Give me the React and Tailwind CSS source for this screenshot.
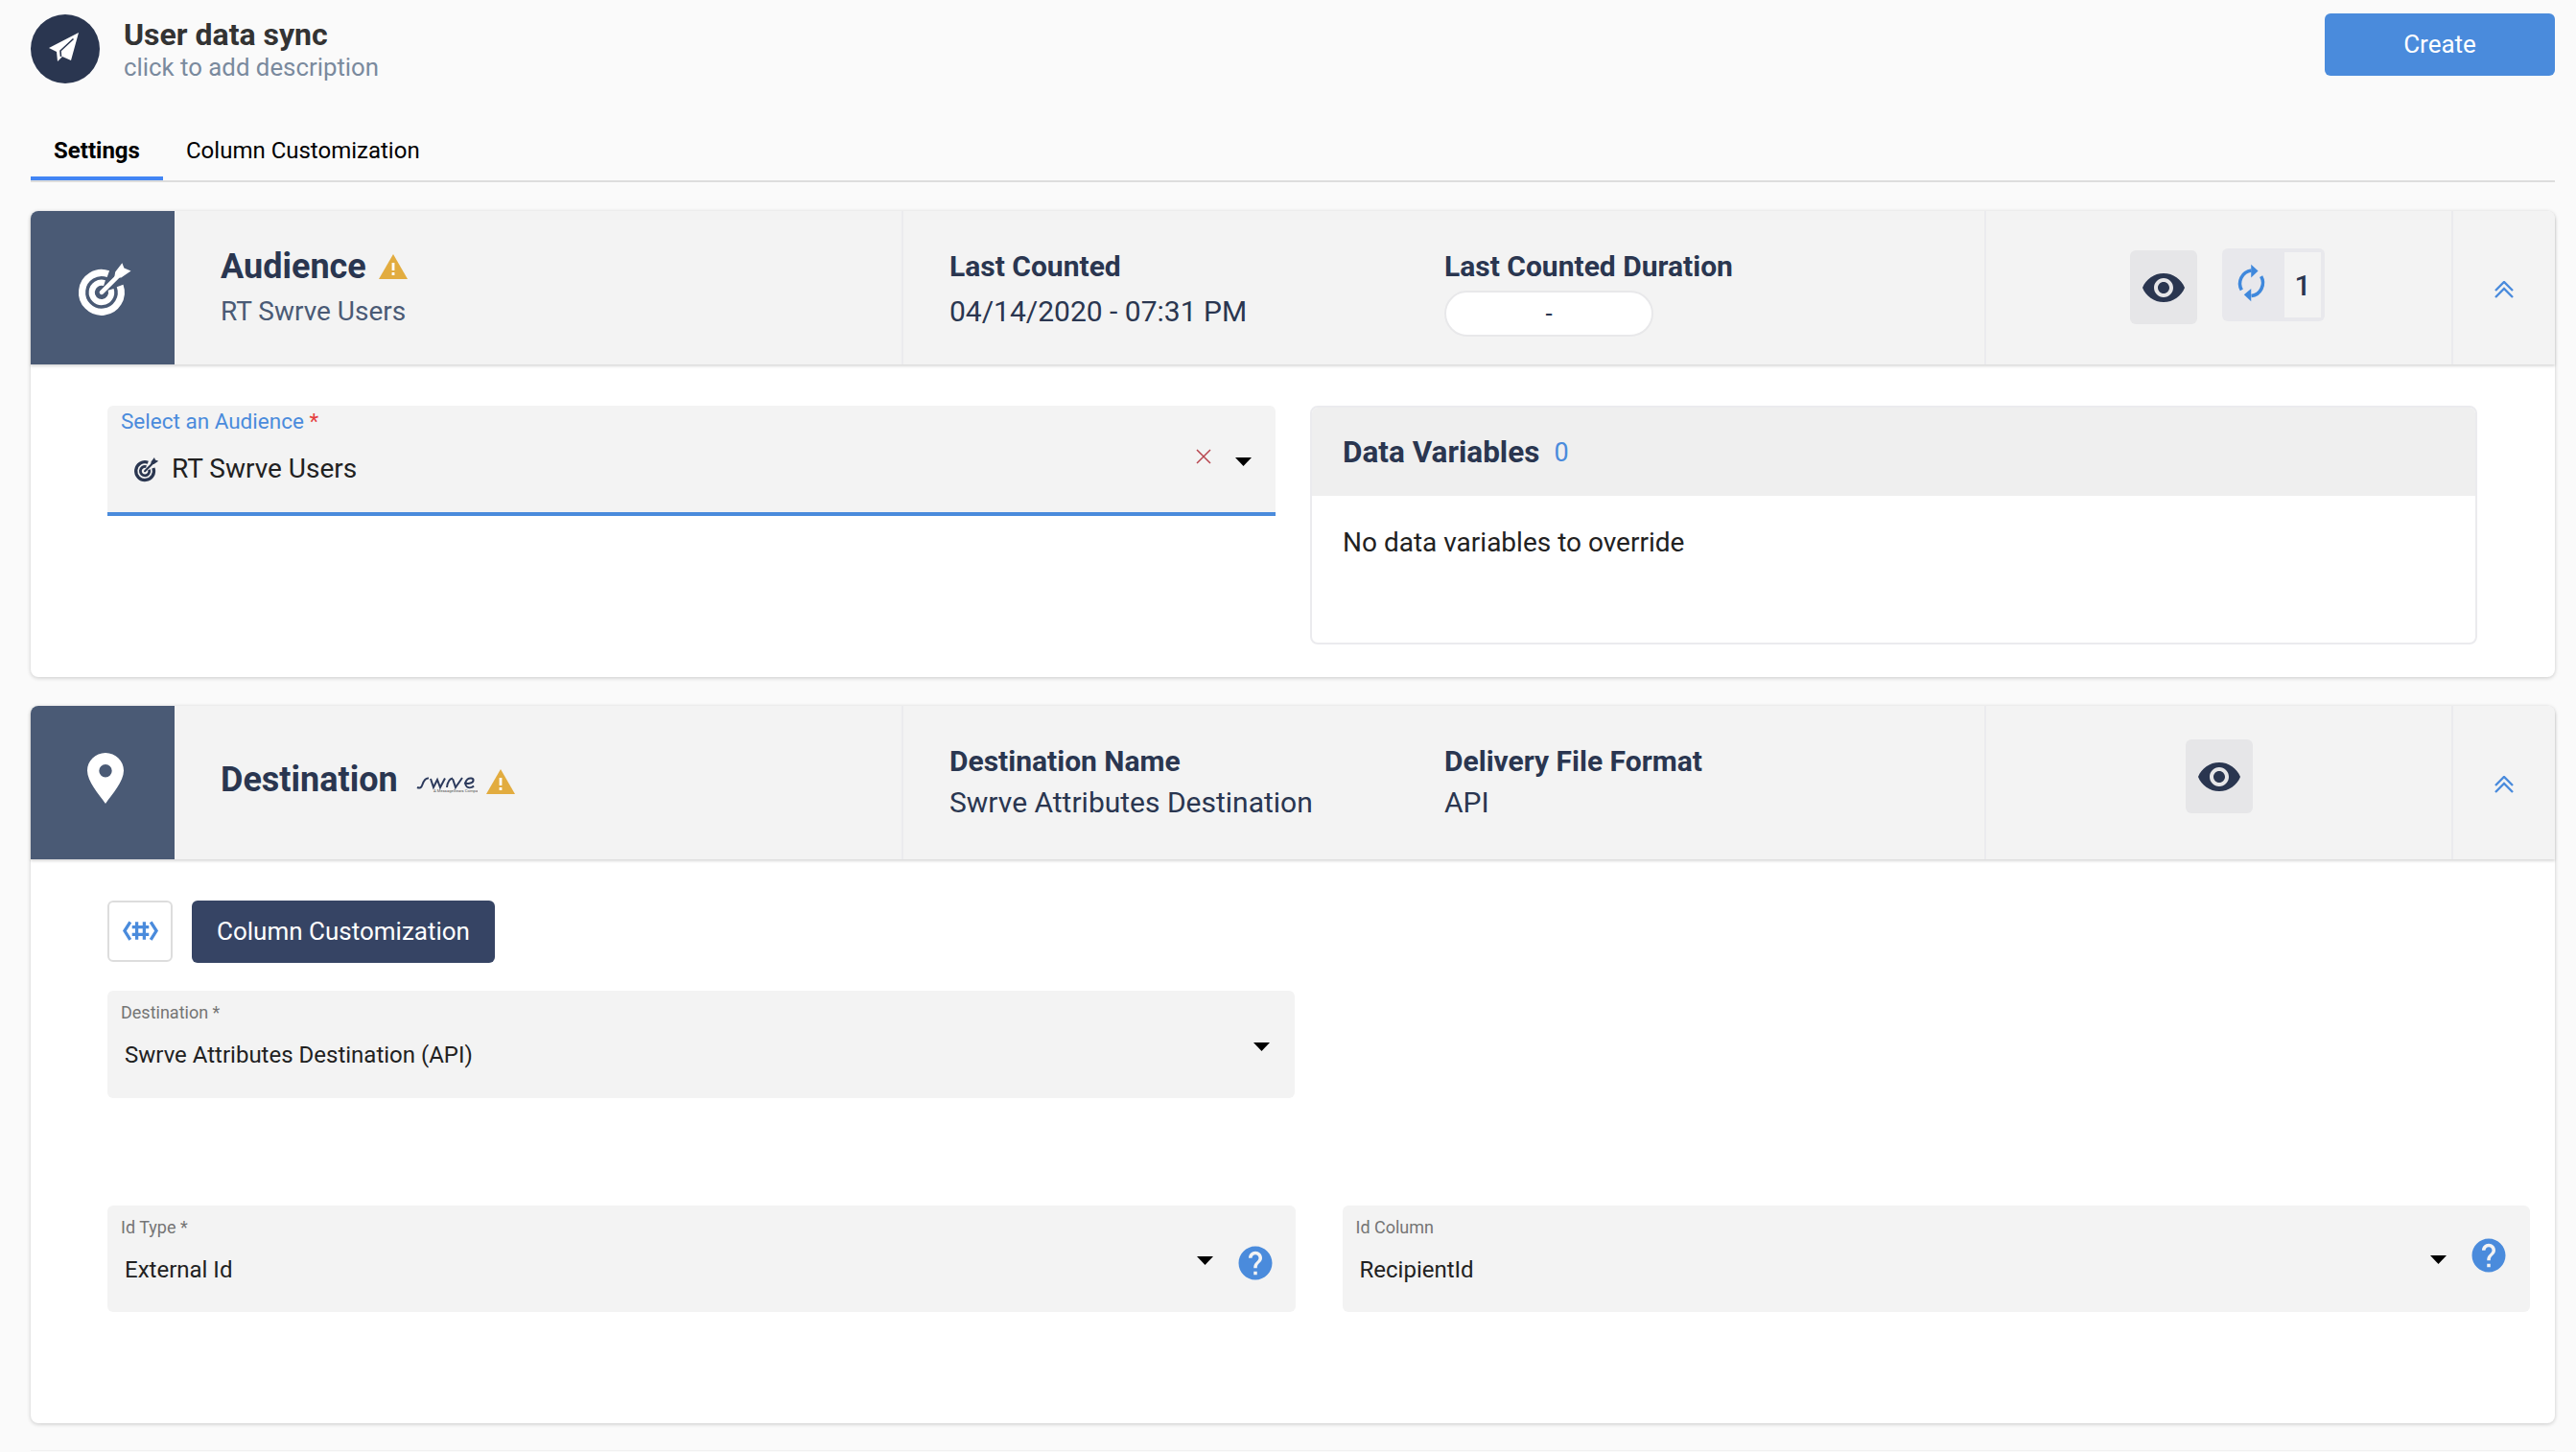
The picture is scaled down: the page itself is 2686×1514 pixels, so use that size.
import { MdVisibility, MdHelp } from 'react-icons/md';

const PlaneIcon = () => (
  <svg width="60" height="60" viewBox="0 0 60 60">
    <path d="M44 13 13 29l8 4 1 10 5-5 9 4z" fill="#fff" />
    <path d="M38.5 19.5 25 32l.5 6" fill="none" stroke="#2a3650" strokeWidth="1.6" />
  </svg>
);

const TargetIcon = ({ size = 102, color = '#fff' }) => (
  <svg width={size} height={size * 0.8} viewBox="0 0 100 80" fill="none" stroke={color}>
    <path d="M53.8 26.2A20 20 0 1 0 65.8 38.2" strokeWidth="7" />
    <path d="M50 35.5A10 10 0 1 0 56.5 42" strokeWidth="6" />
    <path d="M47 45 64 28" strokeWidth="4.5" strokeLinecap="round" />
    <path d="M61 24l7-9 2 5 7 3-10 7h-7z" fill={color} stroke="none" />
  </svg>
);

const PinIcon = () => (
  <svg width="38" height="53" viewBox="0 0 38 53">
    <path
      fillRule="evenodd"
      d="M19 0C8.5 0 0 8.300 0 18.500 0 30 12 43 19 53c7-10 19-23 19-34.500C38 8.300 29.500 0 19 0zm0 12a6.700 6.700 0 1 1 0 13.400A6.700 6.700 0 0 1 19 12z"
      fill="#fff"
    />
  </svg>
);

const WarningIcon = () => (
  <svg width="30" height="26" viewBox="0 0 30 26">
    <path d="M15 0 30 26H0z" fill="#e2ac3f" />
    <path d="M13.600 9h2.800v8h-2.800zM13.600 19h2.800v3h-2.800z" fill="#fff" />
  </svg>
);

const SyncIcon = () => (
  <svg width="60" height="65" viewBox="7 10 60 65" fill="#3f88dc">
    <path d="M37 25A15.500 15.500 0 0 0 25.500 48" fill="none" stroke="#3f88dc" strokeWidth="4" />
    <path d="M37 55A15.500 15.500 0 0 0 48.500 32" fill="none" stroke="#3f88dc" strokeWidth="4" />
    <path d="M36.700 18 45 25.500l-8.300 8zM36.700 46.500l-8.400 7 8.400 8z" />
  </svg>
);

const ChevronsUp = () => (
  <svg width="20" height="18" viewBox="0 0 20 18" fill="none" stroke="#4a8bdc" strokeWidth="2.400">
    <path d="M1 10 10 1l9 9M1 17l9-9 9 9" />
  </svg>
);

const HashIcon = () => (
  <svg width="37" height="22" viewBox="17 26 38 22" fill="none" stroke="#4a8bdc" strokeWidth="3.400">
    <path d="M25 27 19 36.500 25 46M47 27l6 9.500L47 46M32 27v19M40 27v19M27 32.500h18M27 40.500h18" />
  </svg>
);

const SwrveLogo = () => (
  <svg width="64" height="24" viewBox="0 0 64 24" fill="none" stroke="#2c3a5c" strokeWidth="2">
    <path d="M1 13c3 1.500 4.500 0 5.500-3S9 3 13 3.500" />
    <path d="M15 4l3 9 4-8 3 8 5-9.500" />
    <path d="M32 13c.5-4 2-9 6-9.500" />
    <path d="M38 4l3 9 7-10" />
    <path d="M50 8.500c3 .8 9 .5 9.500-2.500C60 3.500 56 2.500 53.500 4.500S50.500 11 53 12.500s5.500.5 7-1" />
    <text x="18" y="17.500" fontSize="4.200" fontFamily="Roboto, sans-serif" fill="#555" stroke="none">A MessageGears Company</text>
  </svg>
);

const Caret = () => (
  <svg width="17" height="9" viewBox="0 0 17 9">
    <path d="M0 0h17L8.500 9z" fill="#000" />
  </svg>
);

const IconBox = ({ children }) => (
  <div className="w-[150px] h-full shrink-0 flex items-center justify-center bg-[#4a5a75] rounded-tl-lg">{children}</div>
);

const Stat = ({ title, value, width }) => (
  <div className={width}>
    <div className="text-[30px] leading-[36px] font-bold text-[#2a3650]">{title}</div>
    {value}
  </div>
);

const Field = ({ label, value, right, height = 'h-[112px]', children }) => (
  <div className={`${height} bg-[#f3f3f3] rounded-md flex justify-between pl-[14px] ${right}`}>
    <div>
      <div className="pt-[12px] text-[18px] leading-[21px] text-[#757575]">{label}</div>
      <div className="pt-[19px] pl-[4px] text-[24px] leading-[30px] text-[#212121]">{value}</div>
    </div>
    <div className="flex items-start gap-[23px]">{children}</div>
  </div>
);

export default function App() {
  return (
    <div className="h-[1514px] overflow-hidden bg-[#fafafa] pl-[32px] pr-[22px] font-['Roboto',sans-serif]">
      {/* Title bar */}
      <div className="flex justify-between pt-[14px]">
        <div className="flex items-center gap-[25px]">
          <div className="w-[72px] h-[72px] rounded-full bg-[#2a3650] flex items-center justify-center">
            <PlaneIcon />
          </div>
          <div className="mt-[4px]">
            <div className="text-[32px] leading-[36px] font-bold text-[#333]">User data sync</div>
            <div className="text-[25.800px] leading-[33px] text-[#7a8a9e]">click to add description</div>
          </div>
        </div>
        <button className="w-[240px] h-[65px] rounded-md bg-[#4a8bdc] text-white text-[26px] font-normal">Create</button>
      </div>

      {/* Tabs */}
      <div className="flex mt-[42px] h-[61px] border-b-2 border-[#dddddd]">
        <div className="w-[138px] h-[59px] border-b-4 border-[#4285f4] flex justify-center pt-[13px] text-[24px] leading-[30px] font-bold text-black">Settings</div>
        <div className="pl-[24px] pt-[13px] text-[24px] leading-[30px] text-black">Column Customization</div>
      </div>

      {/* Audience */}
      <div className="mt-[30px] h-[486px] bg-white rounded-lg shadow-[0_1px_4px_rgba(0,0,0,0.2)]">
        <div className="h-[160px] flex bg-[#f3f3f3] rounded-t-lg shadow-[0_2px_3px_rgba(0,0,0,0.15)]">
          <IconBox><div className="ml-[4px]"><TargetIcon /></div></IconBox>
          <div className="w-[760px] pl-[48px] pt-[38px] border-r-2 border-[#ebebee]">
            <div className="flex items-center gap-[13px]">
              <span className="text-[36px] leading-[40px] font-bold text-[#2a3650]">Audience</span>
              <WarningIcon />
            </div>
            <div className="text-[28px] leading-[34px] mt-[10px] text-[#4a5a75]">RT Swrve Users</div>
          </div>
          <div className="w-[1129px] flex pl-[48px] pt-[40px] border-r-2 border-[#ebebee]">
            <Stat title="Last Counted" width="w-[516px]" value={<div className="text-[30px] leading-[36px] mt-[11px] text-[#2a3650]">04/14/2020 - 07:31 PM</div>} />
            <Stat
              title="Last Counted Duration"
              value={
                <div className="w-[218px] h-[48px] mt-[7px] rounded-full bg-white border-2 border-[#e8e8ea] flex items-center justify-center text-[26px] text-[#2a3650]">-</div>
              }
            />
          </div>
          <div className="w-[487px] flex items-start justify-center gap-[26px] pl-[18px] pt-[41px] border-r-2 border-[#ebebee]">
            <div className="w-[70px] h-[77px] rounded-md bg-[#e6e6e8] flex items-center justify-center">
              <MdVisibility className="text-[#2a3650]" size={48} />
            </div>
            <div className="w-[107px] h-[76px] -mt-[2px] rounded-md bg-[#e8e8ec] flex items-center p-[4px]">
              <div className="w-[61px] flex justify-center pr-[8px]"><SyncIcon /></div>
              <div className="w-[38px] h-[68px] bg-[#f3f3f3] flex items-center justify-center text-[30px] font-medium text-[#2a3650]">1</div>
            </div>
          </div>
          <div className="flex-1 flex justify-center pt-[73px]"><ChevronsUp /></div>
        </div>
        <div className="flex pl-[80px] pt-[43px] gap-[36px]">
          <div className="w-[1218px] h-[115px] bg-[#f3f3f3] rounded-t-md border-b-4 border-[#4a8bdc] flex justify-between pl-[14px] pr-[25px]">
            <div>
              <div className="pt-[3px] text-[22.500px] leading-[26px] text-[#4a8bdc]">Select an Audience <span className="text-[#e53e3e]">*</span></div>
              <div className="flex items-center pt-[18px] pl-[3px] gap-[3px]">
                <TargetIcon size={47} color="#2a3650" />
                <span className="text-[28px] leading-[34px] text-[#212121]">RT Swrve Users</span>
              </div>
            </div>
            <div className="flex items-start gap-[25px] pt-[45px]">
              <svg width="16" height="16" viewBox="0 0 16 16" stroke="#b8464f" strokeWidth="1.500"><path d="M1 1l14 14M15 1 1 15" /></svg>
              <div className="pt-[9px]"><Caret /></div>
            </div>
          </div>
          <div className="w-[1217px] h-[249px] bg-white rounded-lg border-2 border-[#ebebee] overflow-hidden">
            <div className="h-[92px] pt-[2px] bg-[#efefef] flex items-center pl-[32px] gap-[15px]">
              <span className="text-[31.500px] font-bold text-[#2a3650]">Data Variables</span>
              <span className="text-[27px] text-[#4a8bdc]">0</span>
            </div>
            <div className="pl-[32px] pt-[32px] text-[28px] leading-[34px] text-[#212121]">No data variables to override</div>
          </div>
        </div>
      </div>

      {/* Destination */}
      <div className="mt-[30px] h-[748px] bg-white rounded-lg shadow-[0_1px_4px_rgba(0,0,0,0.2)]">
        <div className="h-[160px] flex bg-[#f3f3f3] rounded-t-lg shadow-[0_2px_3px_rgba(0,0,0,0.15)]">
          <IconBox><div className="-mt-[10px] ml-[6px]"><PinIcon /></div></IconBox>
          <div className="w-[760px] pl-[48px] pt-[57px] border-r-2 border-[#ebebee] flex items-start">
            <span className="text-[36px] leading-[40px] font-bold text-[#2a3650]">Destination</span>
            <div className="ml-[19px] mt-[15px]"><SwrveLogo /></div>
            <div className="ml-[9px] mt-[9px]"><WarningIcon /></div>
          </div>
          <div className="w-[1129px] flex pl-[48px] pt-[40px] border-r-2 border-[#ebebee]">
            <Stat title="Destination Name" width="w-[516px]" value={<div className="text-[30px] leading-[36px] mt-[7px] text-[#2a3650]">Swrve Attributes Destination</div>} />
            <Stat title="Delivery File Format" value={<div className="text-[30px] leading-[36px] mt-[7px] text-[#2a3650]">API</div>} />
          </div>
          <div className="w-[487px] flex justify-center pt-[35px] border-r-2 border-[#ebebee]">
            <div className="w-[70px] h-[77px] rounded-md bg-[#e6e6e8] flex items-center justify-center">
              <MdVisibility className="text-[#2a3650]" size={48} />
            </div>
          </div>
          <div className="flex-1 flex justify-center pt-[73px]"><ChevronsUp /></div>
        </div>
        <div className="pl-[80px] pr-[26px] pt-[43px]">
          <div className="flex gap-[20px]">
            <div className="w-[68px] h-[64px] bg-white border-2 border-[#dddddd] rounded-md flex items-center justify-center"><HashIcon /></div>
            <button className="w-[316px] h-[65px] bg-[#364464] rounded-md text-white text-[26px]">Column Customization</button>
          </div>
          <div className="w-[1238px] mt-[29px]">
            <Field label="Destination *" value="Swrve Attributes Destination (API)" right="pr-[26px]">
              <div className="mt-[54px]"><Caret /></div>
            </Field>
          </div>
          <div className="grid grid-cols-2 gap-[49px] mt-[112px]">
            <Field label="Id Type *" value="External Id" right="pr-[21px]" height="h-[111px]">
              <div className="mt-[53px]"><Caret /></div>
              <MdHelp className="text-[#4a8bdc] mt-[39px]" size={42} />
            </Field>
            <Field label="Id Column" value="RecipientId" right="pr-[22px]" height="h-[111px]">
              <div className="mt-[52px]"><Caret /></div>
              <MdHelp className="text-[#4a8bdc] mt-[31px]" size={42} />
            </Field>
          </div>
        </div>
      </div>
      <div className="mt-[28px] h-px bg-[#f0f0f0]" />
    </div>
  );
}
